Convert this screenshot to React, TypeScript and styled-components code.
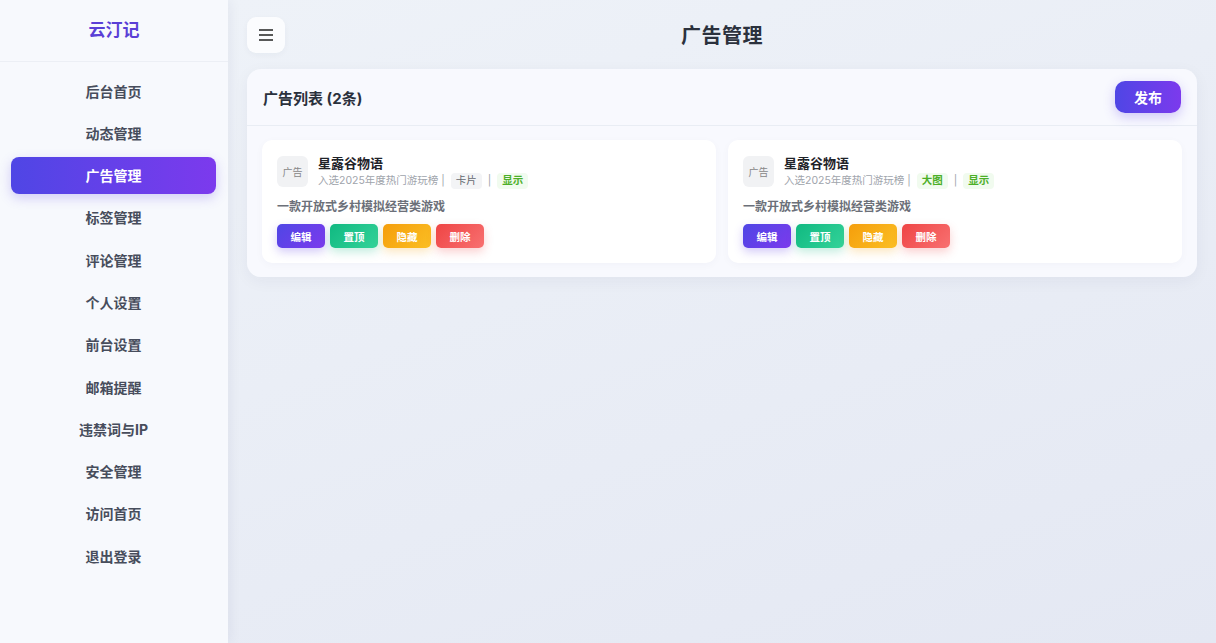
import styled, { createGlobalStyle } from 'styled-components';

const GlobalStyle = createGlobalStyle`
  * { box-sizing: border-box; }
  html, body { margin: 0; padding: 0; }
  body {
    font-family: Inter, "Noto Sans CJK SC", sans-serif;
    background: #eaeef6;
  }
`;

interface AdItem {
  title: string;
  sub: string;
  type: string;
  desc: string;
}

const menuItems: string[] = [
  '后台首页', '动态管理', '广告管理', '标签管理', '评论管理', '个人设置',
  '前台设置', '邮箱提醒', '违禁词与IP', '安全管理', '访问首页', '退出登录',
];

const ads: AdItem[] = [
  { title: '星露谷物语', sub: '入选2025年度热门游玩榜', type: '卡片', desc: '一款开放式乡村模拟经营类游戏' },
  { title: '星露谷物语', sub: '入选2025年度热门游玩榜', type: '大图', desc: '一款开放式乡村模拟经营类游戏' },
];

type Tone = 'purple' | 'green' | 'orange' | 'red';

const actions: { label: string; tone: Tone }[] = [
  { label: '编辑', tone: 'purple' },
  { label: '置顶', tone: 'green' },
  { label: '隐藏', tone: 'orange' },
  { label: '删除', tone: 'red' },
];

const toneBg: Record<Tone, string> = {
  purple: 'linear-gradient(135deg, #4f46e5, #7c3aed)',
  green: 'linear-gradient(135deg, #10b981, #34d399)',
  orange: 'linear-gradient(135deg, #f59e0b, #fbbf24)',
  red: 'linear-gradient(135deg, #ef4444, #f87171)',
};

const toneShadow: Record<Tone, string> = {
  purple: 'rgba(99, 70, 229, 0.28)',
  green: 'rgba(16, 185, 129, 0.25)',
  orange: 'rgba(245, 158, 11, 0.25)',
  red: 'rgba(239, 68, 68, 0.25)',
};

function App() {
  return (
    <>
      <GlobalStyle />
      <Layout>
        <Sidebar>
          <Brand>云汀记</Brand>
          <Menu>
            {menuItems.map((item) => (
              <MenuItem key={item} $active={item === '广告管理'}>{item}</MenuItem>
            ))}
          </Menu>
        </Sidebar>
        <Main>
          <TopBar>
            <MenuButton>
              <svg width="16" height="14" viewBox="0 0 16 14">
                <path d="M1 2h14M1 7h14M1 12h14" stroke="#222" strokeWidth="1.6" />
              </svg>
            </MenuButton>
            <PageTitle>广告管理</PageTitle>
          </TopBar>
          <Panel>
            <PanelHeader>
              <PanelTitle>广告列表 (2条)</PanelTitle>
              <PublishButton>发布</PublishButton>
            </PanelHeader>
            <Grid>
              {ads.map((ad, i) => (
                <AdCard key={i}>
                  <AdTop>
                    <Thumb>广告</Thumb>
                    <AdInfo>
                      <AdTitle>{ad.title}</AdTitle>
                      <MetaRow>
                        <span>{ad.sub} |</span>
                        <Tag $green={ad.type === '大图'}>{ad.type}</Tag>
                        <span>|</span>
                        <Tag $green>显示</Tag>
                      </MetaRow>
                    </AdInfo>
                  </AdTop>
                  <AdDesc>{ad.desc}</AdDesc>
                  <Actions>
                    {actions.map((a) => (
                      <ActionButton key={a.label} $tone={a.tone}>{a.label}</ActionButton>
                    ))}
                  </Actions>
                </AdCard>
              ))}
            </Grid>
          </Panel>
        </Main>
      </Layout>
    </>
  );
}

export default App;

const Layout = styled.div`
  display: flex;
  width: 100%;
  height: 643px;
  overflow: hidden;
`;

const Sidebar = styled.aside`
  width: 228px;
  flex-shrink: 0;
  background: #f7f9fd;
  box-shadow: 2px 0 12px rgba(30, 40, 80, 0.06);
  display: flex;
  flex-direction: column;
  z-index: 1;
`;

const Brand = styled.div`
  height: 62px;
  display: flex;
  align-items: center;
  justify-content: center;
  font-size: 17px;
  font-weight: 700;
  color: #5a3fd6;
  border-bottom: 1px solid #eceff5;
  padding-bottom: 4px;
`;

const Menu = styled.nav`
  display: flex;
  flex-direction: column;
  padding: 10px 12px 0 11px;
  gap: 5.3px;
`;

const MenuItem = styled.div<{ $active?: boolean }>`
  height: 37px;
  display: flex;
  align-items: center;
  justify-content: center;
  font-size: 14px;
  font-weight: 700;
  border-radius: 8px;
  color: ${(p) => (p.$active ? '#ffffff' : '#474d5c')};
  background: ${(p) => (p.$active ? 'linear-gradient(90deg, #4f46e5, #7c3aed)' : 'transparent')};
  box-shadow: ${(p) => (p.$active ? '0 4px 12px rgba(99, 70, 229, 0.25)' : 'none')};
`;

const Main = styled.main`
  flex: 1;
  background: linear-gradient(160deg, #eef2f8 0%, #e8ecf5 60%, #e4e8f3 100%);
  padding: 17px 19px 0 19px;
  display: flex;
  flex-direction: column;
`;

const TopBar = styled.div`
  height: 36px;
  display: flex;
  align-items: center;
`;

const MenuButton = styled.button`
  width: 38px;
  height: 36px;
  border: none;
  border-radius: 9px;
  background: #fbfcfe;
  display: flex;
  align-items: center;
  justify-content: center;
  cursor: pointer;
  box-shadow: 0 2px 6px rgba(30, 40, 80, 0.04);
`;

const PageTitle = styled.h1`
  flex: 1;
  margin: -2px 38px 0 0;
  text-align: center;
  font-size: 20px;
  font-weight: 700;
  color: #2b313d;
  letter-spacing: 0.5px;
`;

const Panel = styled.section`
  margin-top: 16px;
  background: rgba(248, 250, 254, 0.92);
  border-radius: 14px;
  box-shadow: 0 4px 16px rgba(30, 40, 80, 0.05);
  overflow: hidden;
`;

const PanelHeader = styled.div`
  height: 57px;
  display: flex;
  align-items: center;
  justify-content: space-between;
  padding: 0 16px;
  border-bottom: 1px solid #e9edf4;
`;

const PanelTitle = styled.h2`
  margin: 0;
  font-size: 15px;
  font-weight: 700;
  color: #2b313d;
`;

const PublishButton = styled.button`
  width: 66px;
  height: 32px;
  border: none;
  border-radius: 10px;
  background: linear-gradient(90deg, #4f46e5, #7c3aed);
  color: #ffffff;
  font-family: inherit;
  font-size: 14px;
  font-weight: 700;
  box-shadow: 0 4px 12px rgba(99, 70, 229, 0.28);
  cursor: pointer;
`;

const Grid = styled.div`
  display: grid;
  grid-template-columns: 1fr 1fr;
  gap: 12px;
  padding: 14px 15px 14px 15px;
`;

const AdCard = styled.div`
  background: #ffffff;
  border-radius: 10px;
  padding: 14px 15px 15px 15px;
  box-shadow: 0 2px 8px rgba(30, 40, 80, 0.03);
`;

const AdTop = styled.div`
  display: flex;
  align-items: center;
  gap: 10px;
`;

const Thumb = styled.div`
  width: 31px;
  height: 31px;
  border-radius: 6px;
  background: #f1f2f4;
  color: #888;
  font-size: 10px;
  display: flex;
  align-items: center;
  justify-content: center;
  flex-shrink: 0;
`;

const AdInfo = styled.div`
  display: flex;
  flex-direction: column;
  gap: 1px;
`;

const AdTitle = styled.div`
  font-size: 13px;
  font-weight: 700;
  color: #1f2329;
  line-height: 18px;
`;

const MetaRow = styled.div`
  display: flex;
  align-items: center;
  gap: 6px;
  font-size: 10.5px;
  color: #a0a4ac;
  line-height: 16px;
`;

const Tag = styled.span<{ $green?: boolean }>`
  padding: 0 5px;
  border-radius: 4px;
  background: ${(p) => (p.$green ? '#f1fbef' : '#f3f4f6')};
  color: ${(p) => (p.$green ? '#4caf28' : '#666a70')};
  font-weight: ${(p) => (p.$green ? 600 : 400)};
`;

const AdDesc = styled.div`
  margin-top: 9px;
  font-size: 12px;
  font-weight: 600;
  color: #6c7079;
  line-height: 18px;
`;

const Actions = styled.div`
  display: flex;
  gap: 5px;
  margin-top: 8px;
`;

const ActionButton = styled.button<{ $tone: Tone }>`
  width: 48px;
  height: 24px;
  border: none;
  border-radius: 5px;
  color: #ffffff;
  font-family: inherit;
  font-size: 10.5px;
  font-weight: 700;
  background: ${(p) => toneBg[p.$tone]};
  box-shadow: 0 4px 10px ${(p) => toneShadow[p.$tone]};
  cursor: pointer;
`;
